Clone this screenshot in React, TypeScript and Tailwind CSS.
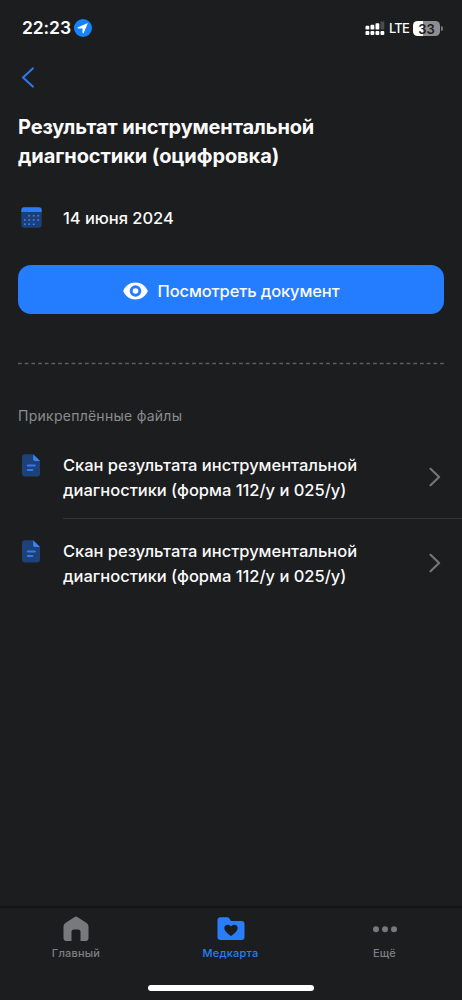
import React from "react";

function StatusBar() {
  return (
    <header className="flex h-14 items-center pl-[22px] pr-[19px]">
      <span className="text-[17.5px] font-semibold leading-5 tracking-[-0.1px]">22:23</span>
      <svg className="ml-[3px]" width="18" height="18" viewBox="0 0 18 18">
        <circle cx="9" cy="9" r="9" fill="#1683fb" />
        <path d="M13.9 4.1 9.7 13.9c-.3.7-1.2.5-1.2-.2V9.7c0-.2-.1-.3-.3-.3H4.3c-.8 0-.9-.9-.2-1.200Z" fill="#fff" />
      </svg>
      <svg className="ml-auto" width="20" height="14" viewBox="0 0 20 14">
        <g fill="#fff">
          <rect x="0.5" y="4.8" width="3.8" height="3.8" rx="0.9" />
          <rect x="5.5" y="3.8" width="3.8" height="4.8" rx="0.9" />
          <rect x="10.5" y="2.2" width="3.8" height="6.4" rx="0.9" />
          <rect x="0.5" y="10" width="3.8" height="4" rx="0.9" />
          <rect x="5.5" y="10" width="3.8" height="4" rx="0.9" />
          <rect x="10.5" y="10" width="3.8" height="4" rx="0.9" />
          <rect x="15.5" y="10" width="3.8" height="4" rx="0.9" />
        </g>
        <rect x="15.5" y="0.4" width="3.8" height="8.2" rx="0.9" fill="#4b4c4e" />
      </svg>
      <span className="ml-[4px] w-[20px] whitespace-nowrap text-[13px] font-medium leading-5 tracking-[-0.8px]">LTE</span>
      <span className="ml-[4px] flex h-[15px] w-[27px] items-center justify-center rounded-[4.5px] bg-[linear-gradient(90deg,#fff_36%,#8e8e90_36%)] pt-[2px] text-[13px] font-semibold leading-none text-[#1c1d1f]">
        33
      </span>
      <span className="ml-px h-[5px] w-[2px] rounded-r-full bg-[#77787a]" />
    </header>
  );
}

function CalendarIcon() {
  return (
    <svg width="21" height="21" viewBox="0 0 21 21">
      <rect x="0.3" y="0.3" width="20.4" height="20.4" rx="3" fill="#1c3f79" />
      <path d="M3.3.3h14.4a3 3 0 0 1 3 3V5H.3V3.3a3 3 0 0 1 3-3Z" fill="#2b7bfa" />
      <g fill="#397bde">
        <circle cx="8.2" cy="8.7" r="1.05" />
        <circle cx="12.7" cy="8.7" r="1.05" />
        <circle cx="17.2" cy="8.7" r="1.05" />
        <circle cx="3.8" cy="13" r="1.05" />
        <circle cx="8.2" cy="13" r="1.05" />
        <circle cx="12.7" cy="13" r="1.05" />
        <circle cx="17.2" cy="13" r="1.05" />
        <circle cx="3.8" cy="17.3" r="1.05" />
        <circle cx="8.2" cy="17.3" r="1.05" />
        <circle cx="12.7" cy="17.3" r="1.05" />
      </g>
    </svg>
  );
}

function FileIcon() {
  return (
    <svg className="shrink-0" width="18" height="23" viewBox="0 0 18 23">
      <path d="M3 .3h8.2L18 7v12.5a3 3 0 0 1-3 3H3a3 3 0 0 1-3-3V3.3a3 3 0 0 1 3-3Z" fill="#1e4179" />
      <path d="M11.2.3 18 7h-5a1.8 1.8 0 0 1-1.8-1.8Z" fill="#3c82f4" />
      <path d="M5.8 11.5h7M5.8 16h4.6" stroke="#3479ee" strokeWidth="2" strokeLinecap="round" />
    </svg>
  );
}

function FileRow({ divided }: { divided?: boolean }) {
  return (
    <li className={divided ? "flex h-[80px] pl-[22px]" : "mt-[6px] flex h-[80px] pl-[22px]"}>
      <div className="pt-[15px]">
        <FileIcon />
      </div>
      <div
        className={
          divided
            ? "ml-[23px] flex flex-1 border-b border-[#343536] pr-[21px] pt-[14px]"
            : "ml-[23px] flex flex-1 pr-[21px] pt-[14px]"
        }
      >
        <p className="whitespace-nowrap text-[16.5px] font-medium leading-[25px] tracking-[-0.02px]">
          Скан результата инструментальной
          <br />
          диагностики (форма 112/у и 025/у)
        </p>
        <svg className="ml-auto mt-[14px]" width="12" height="20" viewBox="0 0 12 20">
          <path d="m1.5 1.8 8.6 8.2-8.6 8.2" fill="none" stroke="#747577" strokeWidth="2.2" strokeLinecap="round" strokeLinejoin="round" />
        </svg>
      </div>
    </li>
  );
}

function TabBar() {
  return (
    <nav className="mt-auto flex h-[94px] flex-col border-t-2 border-[#131416]">
      <div className="grid grid-cols-3 text-[11px] font-medium leading-4 tracking-[0.2px] text-[#7e8083]">
        <div className="flex flex-col items-center pr-[2px] pt-[8px]">
          <svg width="26" height="26" viewBox="0 0 26 26">
            <path d="M11.3 1.2a3 3 0 0 1 3.4 0l8.9 5.9A4 4 0 0 1 25.5 10.4V22a3 3 0 0 1-3 3h-5V16a2.5 2.5 0 0 0-2.5-2.5h-4A2.5 2.5 0 0 0 8.5 16v9h-5a3 3 0 0 1-3-3V10.4a4 4 0 0 1 1.9-3.3Z" fill="#77797c" />
          </svg>
          <span className="mt-[3px]">Главный</span>
        </div>
        <div className="flex flex-col items-center pr-px pt-[8px] text-[#287efa]">
          <svg width="28" height="26" viewBox="0 0 28 26">
            <path d="M3.5 1.200h6.700c.9 0 1.500.4 2 1.100l1.300 1.900c.4.600.9.900 1.600.9h9.400a3 3 0 0 1 3 3v13a3 3 0 0 1-3 3h-21a3 3 0 0 1-3-3V4.200a3 3 0 0 1 3-3Z" fill="currentColor" />
            <path d="M14 20.200c-2.500-1.900-6.700-5-6.700-8.100 0-3.500 4.700-4.500 6.700-1.500 2-3 6.700-2 6.700 1.500 0 3.100-4.200 6.200-6.700 8.100Z" fill="#1c1d1f" />
          </svg>
          <span className="mt-[3px]">Медкарта</span>
        </div>
        <div className="flex flex-col items-center pr-px pt-[8px]">
          <svg width="26" height="26" viewBox="0 0 26 26" fill="#77797c">
            <circle cx="4" cy="13.2" r="3" />
            <circle cx="13" cy="13.2" r="3" />
            <circle cx="22" cy="13.2" r="3" />
          </svg>
          <span className="mt-[3px]">Ещё</span>
        </div>
      </div>
      <div className="mx-auto mb-[9px] mt-auto h-[6px] w-[166px] rounded-full bg-white" />
    </nav>
  );
}

export default function App() {
  return (
    <div className="flex h-[1000px] w-[462px] flex-col overflow-hidden bg-[#1c1d1f] font-['Inter','Noto_Sans',sans-serif] text-[#fafafa]">
      <StatusBar />
      <main>
        <button aria-label="Назад" className="ml-[21px] mt-[11px] block h-[21px]">
          <svg width="14" height="21" viewBox="0 0 14 21">
            <path d="M11.8 1.5 2 10.5l9.8 9" fill="none" stroke="#2b76e8" strokeWidth="2.2" strokeLinecap="round" strokeLinejoin="round" />
          </svg>
        </button>
        <h1 className="ml-[18px] mt-[25px] whitespace-nowrap text-[20px] font-bold leading-[29px]">
          <span className="tracking-[-0.16px]">Результат инструментальной</span>
          <br />
          <span className="tracking-[-0.08px]">диагностики (оцифровка)</span>
        </h1>
        <div className="ml-[21px] mt-[36px] flex h-[21px] items-center gap-[21px]">
          <CalendarIcon />
          <span className="pt-[2px] text-[16.5px] font-medium tracking-[-0.04px]">14 июня 2024</span>
        </div>
        <button className="mx-[18px] mt-[37px] flex h-[49px] w-[426px] items-center justify-center gap-[10px] rounded-[13px] bg-[#247cff] pt-[2px] text-[16.5px] font-medium tracking-[-0.13px]">
          <svg width="25" height="18" viewBox="0 0 25 18">
            <path fillRule="evenodd" d="M12.5.5C7 .5 2.3 3.9.1 9c2.2 5.1 6.9 8.5 12.4 8.5S22.7 14.1 24.900 9C22.700 3.900 18 .5 12.500.5Zm0 2.700a5.800 5.800 0 1 1 0 11.600 5.800 5.800 0 0 1 0-11.600Z" fill="#fff" />
            <circle cx="12.5" cy="9" r="2.8" fill="#fff" />
          </svg>
          <span className="pt-[2px]">Посмотреть документ</span>
        </button>
        <svg className="ml-[18px] mt-[48px] block" width="426" height="3">
          <path d="M0 1.5h426" stroke="#5d5e60" strokeWidth="1.3" strokeDasharray="3.7 3" />
        </svg>
        <h2 className="ml-[18px] mt-[41px] text-[14px] leading-[20px] tracking-[0.26px] text-[#8b8c8e]">
          Прикреплённые файлы
        </h2>
        <ul className="mt-[13px]">
          <FileRow divided />
          <FileRow />
        </ul>
      </main>
      <TabBar />
    </div>
  );
}
